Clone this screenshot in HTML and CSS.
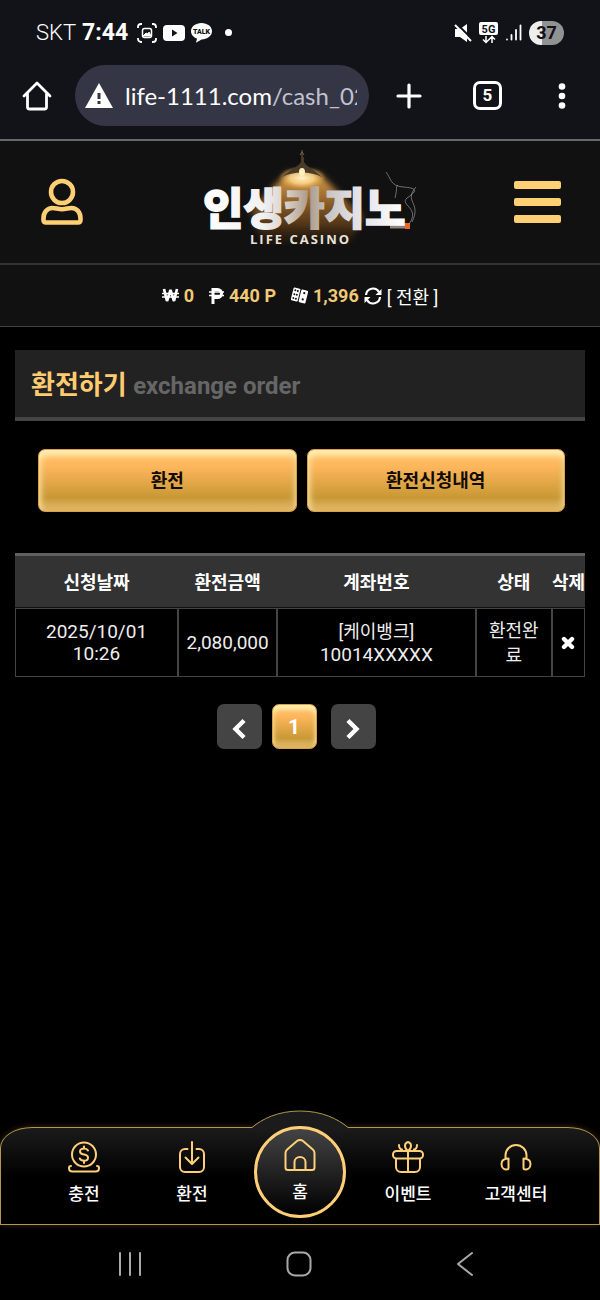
FILE: index.html
```html
<!DOCTYPE html>
<html lang="ko">
<head>
<meta charset="utf-8">
<meta name="viewport" content="width=device-width, initial-scale=1">
<title>환전하기</title>
<link rel="stylesheet" href="styles.css">
</head>
<body>
<div class="screen">
  <div class="chrome">
    <div class="status">
      <div class="status-left">
        <span class="carrier">SKT</span>
        <span class="clock">7:44</span>
        <svg width="20" height="20" viewBox="0 0 20 20" fill="none" stroke="#fff" stroke-width="1.800"><path d="M1 5V4a3 3 0 0 1 3-3h1M15 1h1a3 3 0 0 1 3 3v1M19 15v1a3 3 0 0 1-3 3h-1M5 19H4a3 3 0 0 1-3-3v-1"/><rect x="5.500" y="5.500" width="9" height="9" rx="2" stroke-width="1.500"/><path d="M6 13l3-3 2 1 1-2 2 4z" fill="#fff" stroke-width="1"/></svg>
        <svg width="22" height="16" viewBox="0 0 22 16"><rect width="22" height="16" rx="4" fill="#fff"/><path d="M9 4.500v7l5.500-3.500z" fill="#121319"/></svg>
        <svg width="21" height="20" viewBox="0 0 21 20"><path d="M10.500 0C16.300 0 21 3.600 21 8.200s-4.700 8.200-10.500 8.200L5 19.700l1-4.100C2.500 14.300 0 11.500 0 8.200 0 3.600 4.700 0 10.500 0z" fill="#fff"/><text x="10.500" y="11" text-anchor="middle" class="talk-text">TALK</text></svg>
        <span class="dot"></span>
      </div>
      <div class="status-right">
        <svg width="18" height="18" viewBox="0 0 18 18"><path d="M1 5h5l7-5v18l-7-5H1z" fill="#fff"/><path d="M3 0l16 16" stroke="#121319" stroke-width="2"/><path d="M1 1l16 16" stroke="#fff" stroke-width="2"/></svg>
        <svg width="20" height="22" viewBox="0 0 20 22"><rect width="19" height="13" rx="2" fill="#fff"/><text x="9.500" y="10.500" text-anchor="middle" class="net-text">5G</text><path d="M7 14v6M4 17.500l3 3 3-3M13 21v-6M10 17.500l3-3 3 3" fill="none" stroke="#fff" stroke-width="1.500"/></svg>
        <svg width="16" height="17" viewBox="0 0 16 17" stroke="#fff" stroke-width="1.800" stroke-linecap="round"><path d="M1 15.500v.1M5.500 11v4.600M10 6v9.600M14.500 1.500v14.100"/></svg>
        <span class="battery">37</span>
      </div>
    </div>
    <div class="toolbar">
      <button class="icon-btn" aria-label="홈페이지"><svg width="30" height="30" viewBox="0 0 30 30" fill="none" stroke="#fff" stroke-width="2.800" stroke-linejoin="round" stroke-linecap="round"><path d="M2 15L15 2l13 13M5.500 13v13a2 2 0 0 0 2 2h15a2 2 0 0 0 2-2V13"/></svg></button>
      <div class="address">
        <svg width="28" height="25" viewBox="0 0 28 25"><path d="M14 0l14 25H0z" fill="#fff"/><path d="M14 10v6M14 18v3" stroke="#343645" stroke-width="3"/></svg>
        <span class="url">life-1111.com<span class="path">/cash_02</span></span>
      </div>
      <button class="icon-btn" aria-label="새 탭"><svg width="26" height="26" viewBox="0 0 26 26" stroke="#fff" stroke-width="3.200" stroke-linecap="round"><path d="M13 2v22M2 13h22"/></svg></button>
      <button class="tabs">5</button>
      <button class="icon-btn" aria-label="메뉴"><svg width="8" height="26" viewBox="0 0 8 26" fill="#fff"><circle cx="4" cy="3.500" r="3.300"/><circle cx="4" cy="13" r="3.300"/><circle cx="4" cy="22.500" r="3.300"/></svg></button>
    </div>
  </div>

  <header class="site-header">
    <button class="icon-btn" aria-label="내 정보"><svg width="42" height="48" viewBox="0 0 42 48" fill="none" stroke="#ffcf73" stroke-width="4.600" stroke-linejoin="round"><circle cx="21" cy="14" r="11"/><path d="M2.500 42v-1.500c0-6 3.500-10.500 9-10.500 4 0 5 1.200 9.500 1.200s5.500-1.200 9.500-1.200c5.500 0 9 4.500 9 10.500V42q0 2.500-2.500 2.500H5q-2.500 0-2.500-2.500z"/></svg></button>
    <a class="logo" href="#" aria-label="인생카지노 LIFE CASINO">
      <svg width="216" height="104" viewBox="0 0 216 104">
        <defs>
          <linearGradient id="beam" x1="0" y1="22" x2="0" y2="98" gradientUnits="userSpaceOnUse"><stop offset="0" stop-color="#e0a650"/><stop offset=".35" stop-color="#a8722f" stop-opacity=".9"/><stop offset=".7" stop-color="#6b431a" stop-opacity=".7"/><stop offset="1" stop-color="#3a220a" stop-opacity="0"/></linearGradient>
          <radialGradient id="bulb"><stop offset="0" stop-color="#fff4c8"/><stop offset=".5" stop-color="#ffd88b" stop-opacity=".8"/><stop offset="1" stop-color="#e0a040" stop-opacity="0"/></radialGradient>
          <linearGradient id="letters" x1="0" x2="1"><stop offset="0" stop-color="#fff"/><stop offset=".3" stop-color="#f1f1f3"/><stop offset=".42" stop-color="#d5cdc6"/><stop offset=".52" stop-color="#ad9a88"/><stop offset=".62" stop-color="#c9c5c5"/><stop offset=".75" stop-color="#e0e0e6"/><stop offset="1" stop-color="#fff"/></linearGradient>
          <filter id="soft" x="-20%" y="-20%" width="140%" height="140%"><feGaussianBlur stdDeviation="3"/></filter>
        </defs>
        <path d="M84 23h32l44 44-14 30H60L48 60z" fill="url(#beam)" filter="url(#soft)"/>
        <ellipse cx="99" cy="28" rx="24" ry="12" fill="url(#bulb)"/>
        <path d="M99 0v9M97 5l2-3 2 3" fill="none" stroke="#77634c"/>
        <path d="M98 7h3v5c3 5 9 7 18 15-11-6-29-6-40 0 9-8 16-10 19-15z" fill="#4a3a28"/>
        <ellipse cx="99" cy="22" rx="3" ry="4" fill="#fff0bd"/>
        <path d="M187 76h17" stroke="#8c8580" stroke-width="5"/><path d="M202 76h5" stroke="#e96825" stroke-width="6"/>
        <path d="M206 74c12-16-10-19-2-26 12-8 9-10-4-11s-12-9-17-15M209 72c10-20-9-20 4-35M192 48c3-12 0-10 3-13" fill="none" stroke="#aaa" stroke-opacity=".6" stroke-width="1"/>
        <text x="0" y="75" class="logo-ko" fill="url(#letters)" stroke="url(#letters)" stroke-width="1.500">인생카지노</text>
        <text x="47" y="94" class="logo-en">LIFE CASINO</text>
      </svg>
    </a>
    <button class="menu-btn" aria-label="전체 메뉴"><span></span><span></span><span></span></button>
  </header>

  <div class="wallet">
    <span class="coin"><svg width="17" height="15" viewBox="0 0 17 15" fill="none" stroke="#fff"><path d="M2 1l3 12L8.500 2 12 13l3-12" stroke-width="2.700" stroke-linejoin="bevel"/><path d="M0 5.500h17M0 9h17" stroke-width="1.300"/></svg><b>0</b></span>
    <span class="coin"><svg width="15" height="16" viewBox="0 0 15 16" fill="none" stroke="#fff"><path d="M4 16V1.500h4.500a3.500 3.500 0 0 1 0 8H4" stroke-width="3"/><path d="M0 4h15M0 7.500h15" stroke-width="1.500"/></svg><b>440 P</b></span>
    <span class="coin"><svg width="17" height="17" viewBox="0 0 17 17"><g transform="rotate(14 8.500 8.500)" fill="#fff"><rect x="1" y="2" width="7" height="13" rx="1"/><rect x="9" y="2" width="7" height="13" rx="1"/><g fill="#111"><circle cx="3.200" cy="4.500" r="1"/><circle cx="5.800" cy="4.500" r="1"/><circle cx="3.200" cy="8.500" r="1"/><circle cx="5.800" cy="8.500" r="1"/><circle cx="3.200" cy="12.500" r="1"/><circle cx="5.800" cy="12.500" r="1"/><circle cx="12.500" cy="5" r="1.100"/><circle cx="12.500" cy="11.500" r="1.100"/></g></g></svg><b>1,396</b></span>
    <button class="convert"><svg width="18" height="18" viewBox="0 0 18 18" fill="none" stroke="#fff" stroke-width="2.200"><path d="M2 8a7 7 0 0 1 13-3M16 10a7 7 0 0 1-13 3"/><path d="M17.500 2v6h-6zM.5 16v-6h6z" fill="#fff" stroke="none"/></svg>[ 전환 ]</button>
  </div>

  <main class="content">
    <h1 class="title">환전하기 <small>exchange order</small></h1>
    <div class="actions">
      <button class="gold">환전</button>
      <button class="gold">환전신청내역</button>
    </div>
    <table class="history">
      <colgroup><col class="c-date"><col class="c-amount"><col class="c-account"><col class="c-state"><col class="c-delete"></colgroup>
      <thead><tr><th>신청날짜</th><th>환전금액</th><th>계좌번호</th><th>상태</th><th>삭제</th></tr></thead>
      <tbody><tr>
        <td class="num">2025/10/01 10:26</td>
        <td class="num">2,080,000</td>
        <td>[케이뱅크]<br><span class="num">10014XXXXX</span></td>
        <td class="state">환전완료</td>
        <td><button class="icon-btn" aria-label="삭제"><svg width="14" height="14" viewBox="0 0 14 14" stroke="#fff" stroke-width="4.400" stroke-linecap="round"><path d="M3 3l8 8M11 3l-8 8"/></svg></button></td>
      </tr></tbody>
    </table>
    <nav class="pages" aria-label="페이지">
      <button class="page" aria-label="이전"><svg width="14" height="22" viewBox="0 0 14 22" fill="none" stroke="#fff" stroke-width="4.400" stroke-linecap="square"><path d="M10.500 4l-7 7 7 7"/></svg></button>
      <button class="page current">1</button>
      <button class="page next" aria-label="다음"><svg width="14" height="22" viewBox="0 0 14 22" fill="none" stroke="#fff" stroke-width="4.400" stroke-linecap="square"><path d="M3.500 4l7 7-7 7"/></svg></button>
    </nav>
  </main>

  <nav class="dock">
    <svg class="bump" width="100" height="20" viewBox="0 0 100 20"><path d="M1 20v-2.500C12 9 28 1 50 1s38 8 49 16.500V20z" fill="#1b1b1b"/><path d="M0 17.500h2C12 9 28 1 50 1s38 8 48 16.500h2" fill="none" stroke="#b39650"/></svg>
    <a href="#"><svg width="32" height="32" viewBox="0 0 32 32"><circle cx="16" cy="13.500" r="12"/><path d="M20 9.500c-.8-1.400-2.200-2-4-2-2.200 0-4 1-4 3s1.800 2.700 4 3 4 1.200 4 3.200-1.800 3-4 3c-1.900 0-3.500-.8-4.200-2.200M16 5.500v2M16 19.500v2.500M3 25c-2 0-2 2-2 2 0 2 1.500 3.500 3.500 3.500h23c2 0 3.500-1.500 3.500-3.500 0 0 0-2-2-2"/></svg>충전</a>
    <a href="#"><svg width="32" height="32" viewBox="0 0 32 32"><path d="M16 1v21M9.500 16.500L16 23l6.500-6.500M11.500 8H9a5 5 0 0 0-5 5v13a5 5 0 0 0 5 5h14a5 5 0 0 0 5-5V13a5 5 0 0 0-5-5h-2.500"/></svg>환전</a>
    <a href="#" class="home"><svg width="32" height="32" viewBox="0 0 32 32"><path d="M1.500 14c0-1.500.6-2.500 1.700-3.500L13 2q3-2 6 0l9.800 8.500c1.100 1 1.700 2 1.700 3.500v14.500q0 2.500-2.500 2.500H4q-2.500 0-2.500-2.500z"/><path d="M10.500 31v-8c0-3 2.300-5 5.500-5s5.500 2 5.500 5v8"/></svg>홈</a>
    <a href="#"><svg width="32" height="32" viewBox="0 0 32 32"><rect x="1" y="10" width="30" height="7.500" rx="3.500"/><path d="M4 18v8a5 5 0 0 0 5 5h14a5 5 0 0 0 5-5v-8M16 10v21M16 10c-4-3-4-8 0-9 4 1 4 6 0 9zM7 4c0 4 3 4.500 3 4.500M25 4c0 4-3 4.500-3 4.500"/></svg>이벤트</a>
    <a href="#"><svg width="32" height="32" viewBox="0 0 32 32"><path d="M5.500 18v-3.500a10.500 10.500 0 0 1 21 0V18M8.500 17.500c-4 0-7 1.500-7 5.500s3 5.500 5 5.500c1 0 2-.5 2-1.500zM23.500 17.500c4 0 7 1.500 7 5.500s-3 5.500-5 5.500c-1 0-2-.5-2-1.500z"/></svg>고객센터</a>
  </nav>

  <div class="system">
    <button class="icon-btn" aria-label="최근 앱"><svg width="24" height="26" viewBox="0 0 24 26" stroke="#a9a9a9" stroke-width="2" stroke-linecap="round"><path d="M2 2v22M12 2v22M22 2v22"/></svg></button>
    <button class="icon-btn" aria-label="홈"><svg width="26" height="26" viewBox="0 0 26 26" fill="none" stroke="#a9a9a9" stroke-width="2"><rect x="1.500" y="1.500" width="23" height="23" rx="7.500"/></svg></button>
    <button class="icon-btn" aria-label="뒤로"><svg width="18" height="26" viewBox="0 0 18 26" fill="none" stroke="#a9a9a9" stroke-width="2" stroke-linecap="round" stroke-linejoin="round"><path d="M16 2L2 13l14 11"/></svg></button>
  </div>
</div>
</body>
</html>
```

FILE: styles.css
```css
* { box-sizing: border-box; }

body {
  margin: 0;
  background: #000;
  color: #fff;
  font-family: Roboto, "Noto Sans CJK KR", sans-serif;
  font-size: 18px;
}

button {
  font: inherit;
  color: inherit;
  background: none;
  border: 0;
  padding: 0;
}

a { color: inherit; text-decoration: none; }
svg { display: block; flex: none; }

.screen {
  display: flex;
  flex-direction: column;
  min-height: 100vh;
}

.icon-btn { display: grid; place-items: center; }

/* Browser chrome */
.chrome {
  background: #121319;
  border-bottom: 2px solid #66686c;
}

.status {
  display: flex;
  justify-content: space-between;
  align-items: center;
  height: 65px;
  padding: 0 36px;
}

.status-left, .status-right { display: flex; align-items: center; gap: 6px; }
.status-right { gap: 7px; }
.carrier { font-size: 22px; font-weight: 300; }
.clock { font-size: 23px; font-weight: 700; margin-right: 3px; }
.talk-text { font: 900 7px Roboto, sans-serif; fill: #121319; }
.net-text { font: 700 11px Roboto, sans-serif; fill: #121319; }

.dot {
  width: 7px;
  height: 7px;
  margin-left: 7px;
  border-radius: 50%;
  background: #fff;
}

.battery {
  width: 35px;
  border-radius: 12px;
  background: linear-gradient(90deg, #eee 37%, #929292 37%);
  color: #121319;
  font-size: 18px;
  font-weight: 700;
  line-height: 24px;
  text-align: center;
}

.toolbar {
  display: flex;
  align-items: center;
  padding: 0 34px 13px 22px;
}

.address {
  display: flex;
  flex: 1;
  align-items: center;
  gap: 12px;
  min-width: 0;
  height: 61px;
  margin: 0 27px 0 23px;
  padding: 0 12px 0 10px;
  border-radius: 31px;
  background: #343645;
}

.url {
  min-width: 0;
  overflow: hidden;
  white-space: nowrap;
  font-family: Lato, sans-serif;
  font-size: 24px;
  line-height: 36px;
}

.path { color: #c0c2d0; }

.tabs {
  width: 29px;
  height: 29px;
  margin: 0 56px 0 51px;
  border: 3px solid #fff;
  border-radius: 7px;
  font-size: 17px;
  font-weight: 700;
  line-height: 23px;
}

/* Site header */
.site-header {
  display: flex;
  justify-content: space-between;
  align-items: center;
  height: 124px;
  padding: 0 39px 0 41px;
  background: #111;
  border-bottom: 2px solid #333;
}

.logo { padding-left: 24px; }
.logo-ko { font: 900 44px "Noto Sans CJK KR", sans-serif; }
.logo-en { font: 700 13px "Open Sans", sans-serif; fill: #e8e2dc; letter-spacing: 2px; }

.menu-btn { display: grid; gap: 9px; width: 47px; }
.menu-btn span { height: 8px; border-radius: 2px; background: #ffcf73; }

.wallet {
  display: flex;
  justify-content: center;
  align-items: center;
  height: 62px;
  background: #111;
  border-bottom: 1px solid #444;
}

.coin { display: flex; align-items: center; gap: 5px; margin-right: 15px; }
.coin:nth-child(3) { margin-right: 5px; }
.coin b { font-weight: 700; color: #f0c877; }
.convert { display: flex; align-items: center; gap: 5px; }

/* Content */
.content { flex: 1; padding: 23px 15px; }

.title {
  margin: 0 0 28px;
  padding: 4px 16px 0;
  background: #222;
  border-bottom: 4px solid #444;
  color: #ffcb70;
  font-size: 26px;
  line-height: 62px;
}

.title small { color: #666; font-size: 24px; }

.actions { display: flex; gap: 10px; padding: 0 20px 0 23px; }

.gold, .current {
  border: 1px solid #dba044;
  background: linear-gradient(#ffb75d 0 25%, #c99835 78%, #d5aa50);
}

.gold {
  flex: 1;
  height: 63px;
  padding-bottom: 3px;
  border-radius: 7px;
  color: #110b05;
  font-weight: 700;
  box-shadow: inset 1px 6px 7px #fff0b4, inset -1px -7px 7px #ddb463;
}

.history {
  width: 100%;
  margin-top: 41px;
  border-spacing: 0;
  border-top: 3px solid #606060;
  table-layout: fixed;
  text-align: center;
}

.c-date { width: 28.6%; }
.c-amount { width: 17.4%; }
.c-account { width: 34.8%; }
.c-state { width: 13.4%; }
.c-delete { width: 5.8%; }

th {
  height: 52px;
  padding: 0 0 2px;
  background: #333;
  border-bottom: 1px solid #111;
  font-weight: 700;
  white-space: nowrap;
}

td {
  height: 69px;
  padding: 0;
  border: 1px solid #444;
  color: #eee;
  line-height: 23px;
}

td .icon-btn { width: 100%; }
.num { font-size: 19px; line-height: 22px; }
td:first-child { padding: 0 28px; }
.state { padding: 0 11px; line-height: 25px; word-break: break-all; }

.pages { display: flex; justify-content: center; gap: 10px; margin: 27px 0 0; padding-right: 8px; }

.page {
  display: grid;
  place-items: center;
  width: 45px;
  height: 45px;
  padding-top: 4px;
  border-radius: 7px;
  background: #444;
}

.next { margin-left: 4px; }

.current {
  padding: 0;
  background: linear-gradient(#ffb75d 0 25%, #c99835 78%, #d5aa50);
  box-shadow: inset 0 5px 5px #fff0b4, inset 0 -6px 5px #ddb463;
  font-size: 21px;
  font-weight: 700;
}

/* Bottom dock */
.dock {
  position: relative;
  display: flex;
  justify-content: center;
  height: 98px;
  border: 1px solid #b39650;
  border-radius: 32px 32px 0 0 / 21px 21px 0 0;
  background: linear-gradient(#1b1b1b, #000 52%);
  box-shadow: 0 0 6px #3a2909;
}

.dock a {
  position: relative;
  display: flex;
  flex-direction: column;
  align-items: center;
  flex: 0 1 108px;
  gap: 8px;
  padding-top: 13px;
  font-size: 17px;
  font-weight: 500;
  line-height: 26px;
}

.dock a svg {
  fill: none;
  stroke: #ffcf78;
  stroke-width: 2;
  stroke-linecap: round;
  stroke-linejoin: round;
}

.dock .bump { position: absolute; top: -18px; left: calc(50% - 50px); }

.dock .home {
  flex: 0 0 92px;
  height: 92px;
  margin: -2px 8px 0;
  padding-top: 10px;
  border: 3px solid #ffcf78;
  border-radius: 50%;
  background: linear-gradient(#444, #000);
}

.system {
  display: flex;
  justify-content: space-between;
  align-items: center;
  height: 75px;
  padding: 2px 126px 0 118px;
}
```
